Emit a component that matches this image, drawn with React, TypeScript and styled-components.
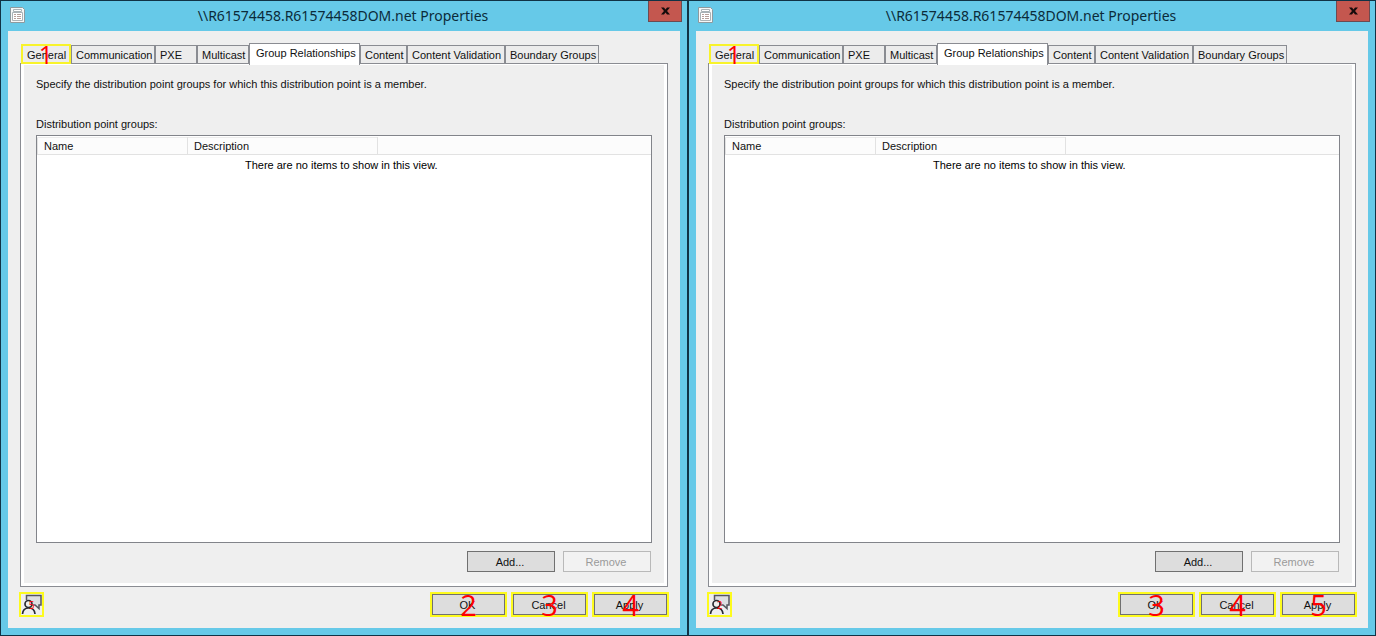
import React from "react";
import styled, { createGlobalStyle, css } from "styled-components";

const GlobalStyle = createGlobalStyle`
  *, *::before, *::after { box-sizing: border-box; }
  body {
    margin: 0;
    background: #123c50;
    color: #111;
    font-family: "Liberation Sans", Arial, sans-serif;
    font-size: 11px;
    line-height: 14px;
  }
  button { font: inherit; color: inherit; }
`;

const Desktop = styled.main`
  display: flex;
  min-height: 100vh;
`;

const Window = styled.section`
  flex: 1;
  min-width: 0;
  display: flex;
  flex-direction: column;
  border: 1px solid #103245;
  background: #66c9e8;
`;

const TitleBar = styled.header`
  display: grid;
  grid-template-columns: 34px 1fr 34px;
  height: 30px;
  padding: 0 5px 0 8px;
`;

const DocumentIcon = styled.svg`
  margin-top: 6px;
`;

const Title = styled.h1`
  margin: 0;
  padding-right: 5px;
  font: 400 14px/29px "Noto Sans", "Open Sans", sans-serif;
  text-align: center;
  white-space: nowrap;
  color: #0b2b3a;
`;

const CloseButton = styled.button`
  display: grid;
  place-items: center;
  height: 21px;
  padding: 0;
  border: 1px solid #6d4a50;
  border-top: 0;
  background: #c4574f;
`;

const Client = styled.div`
  flex: 1;
  display: flex;
  flex-direction: column;
  margin: 0 7px 7px;
  padding: 12px 11px 11px;
  background: #efefef;
`;

const TabStrip = styled.div`
  display: flex;
  align-items: flex-end;
  height: 20px;
  margin: 0 2px;
`;

const Tab = styled.button<{ $width: number; $marked?: boolean }>`
  flex: none;
  position: relative;
  width: ${(p) => p.$width}px;
  height: 18px;
  padding: 1px 0 0 4px;
  border: 1px solid #8a8c92;
  border-bottom: 0;
  background: #ececec;
  text-align: left;
  white-space: nowrap;

  &[aria-selected="true"] {
    z-index: 1;
    height: 22px;
    margin-bottom: -2px;
    padding: 0 0 3px 6px;
    background: #fff;
  }

  ${(p) =>
    p.$marked &&
    css`
      height: 20px;
      margin-bottom: -1px;
      z-index: 1;
      border: 2px solid #f8f32b;
    `}
`;

const Panel = styled.div`
  flex: 1;
  display: flex;
  margin: 0 1px;
  padding: 1px 3px 3px;
  border: 1px solid #8a8c92;
  background: #fff;
`;

const Page = styled.div`
  flex: 1;
  display: flex;
  flex-direction: column;
  padding: 12px 12px 11px;
  background: #efefef;
`;

const Intro = styled.p`
  margin: 0 0 26px;
`;

const ListLabel = styled.h2`
  margin: 0 0 4px;
  font: inherit;
`;

const ListBox = styled.div`
  flex: 1;
  padding: 1px 0;
  border: 1px solid #82848a;
  background: #fff;
`;

const ListTable = styled.table`
  width: 100%;
  border-collapse: collapse;
  table-layout: fixed;
`;

const Column = styled.th<{ $width?: number }>`
  width: ${(p) => (p.$width ? `${p.$width}px` : "auto")};
  height: 17px;
  padding: 0 5px 0 6px;
  border: 1px solid #e2e2e2;
  border-top-color: #ececec;
  background: #fcfcfc;
  font-weight: 400;
  text-align: left;

  &:last-child {
    border-top-color: #fcfcfc;
    border-right: 0;
  }
`;

const EmptyCell = styled.td`
  padding: 3px 6px 0 0;
  text-align: center;
  color: #000;
`;

const ListActions = styled.div`
  display: flex;
  justify-content: flex-end;
  gap: 8px;
  margin: 8px 1px 0 0;
`;

const PushButton = styled.button`
  width: 88px;
  height: 21px;
  padding: 0 2px 0 0;
  border: 1px solid #707070;
  background: #dddddd;
  text-align: center;

  &:disabled {
    border-color: #b9b9b9;
    background: #f2f2f2;
    color: #9a9a9a;
  }
`;

const Footer = styled.footer`
  display: flex;
  gap: 4px;
  margin-top: 5px;
`;

const Highlight = styled.div`
  position: relative;
  display: flex;
  height: 25px;
  border: 2px solid #fdfb1e;

  &:first-child { margin-right: auto; }
  ${PushButton} { width: 73px; }
`;

const FeedbackButton = styled.button`
  display: grid;
  width: 21px;
  height: 21px;
  padding: 0;
  border: 0;
  background: #efefef;
`;

const Marker = styled.span<{ $size: number }>`
  position: absolute;
  inset: 0;
  display: grid;
  place-content: center;
  font: 400 ${(p) => p.$size}px/20px "Open Sans", "Noto Sans", sans-serif;
  color: #ff0000;
  pointer-events: none;
`;

const tabs = [
  { label: "General", width: 50 },
  { label: "Communication", width: 84 },
  { label: "PXE", width: 42 },
  { label: "Multicast", width: 52 },
  { label: "Group Relationships", width: 111 },
  { label: "Content", width: 47 },
  { label: "Content Validation", width: 98 },
  { label: "Boundary Groups", width: 94 },
];

function PropertiesWindow({ feedback, actions }: { feedback: number; actions: number[] }) {
  return (
    <Window>
      <TitleBar>
        <DocumentIcon width="16" height="16" viewBox="0 0 16 16" aria-hidden="true">
          <path d="M1.5.5h12l2 2v13h-14z" fill="#f5f7f7" stroke="#8d9a9f" />
          <path d="M4.5 2.5h8v2h-8zM3.5 5.5h10v8h-10z" fill="#fff" stroke="#a9b2b6" />
          <path d="M5 7.5h2M8 7.5h4M5 9.5h2M8 9.5h4M5 11.5h2M8 11.5h4" stroke="#b5a09b" />
        </DocumentIcon>
        <Title>{"\\\\R61574458.R61574458DOM.net Properties"}</Title>
        <CloseButton aria-label="Close">
          <svg width="9" height="8" viewBox="0 0 10 8" aria-hidden="true">
            <path d="M0 0h3.3L5 2.4 6.7 0H10L6.7 4 10 8H6.7L5 5.6 3.3 8H0l3.3-4z" fill="#160b0b" />
          </svg>
        </CloseButton>
      </TitleBar>
      <Client>
        <TabStrip role="tablist">
          {tabs.map((tab, i) => (
            <Tab
              key={tab.label}
              role="tab"
              aria-selected={i === 4}
              $width={tab.width}
              $marked={i === 0}
            >
              {tab.label}
              {i === 0 && <Marker $size={25}>1</Marker>}
            </Tab>
          ))}
        </TabStrip>
        <Panel role="tabpanel">
          <Page>
            <Intro>
              Specify the distribution point groups for which this distribution point is a member.
            </Intro>
            <ListLabel>Distribution point groups:</ListLabel>
            <ListBox>
              <ListTable aria-label="Distribution point groups">
                <thead>
                  <tr>
                    <Column $width={150}>Name</Column>
                    <Column $width={190}>Description</Column>
                    <Column />
                  </tr>
                </thead>
                <tbody>
                  <tr>
                    <EmptyCell colSpan={3}>There are no items to show in this view.</EmptyCell>
                  </tr>
                </tbody>
              </ListTable>
            </ListBox>
            <ListActions>
              <PushButton>Add...</PushButton>
              <PushButton disabled>Remove</PushButton>
            </ListActions>
          </Page>
        </Panel>
        <Footer>
          <Highlight>
            <FeedbackButton aria-label="Feedback">
              <svg width="21" height="21" viewBox="0 0 21 21" aria-hidden="true">
                <path d="M5.5 6V1.5h14.5v9.5h-2v3.5L14 11h-2" fill="#dcdee2" stroke="#55565f" strokeWidth="1.5" />
                <circle cx="7.5" cy="10" r="3.5" fill="#efefef" stroke="#2a2c33" strokeWidth="1.7" />
                <path d="M1.5 20c.3-4.2 2.5-6 6.2-6s6 1.8 6.3 6" fill="#efefef" stroke="#2a2c33" strokeWidth="1.7" />
              </svg>
            </FeedbackButton>
            <Marker $size={10}>{feedback}</Marker>
          </Highlight>
          {["OK", "Cancel", "Apply"].map((label, i) => (
            <Highlight key={label}>
              <PushButton>{label}</PushButton>
              <Marker $size={29}>{actions[i]}</Marker>
            </Highlight>
          ))}
        </Footer>
      </Client>
    </Window>
  );
}

export default function App() {
  return (
    <>
      <GlobalStyle />
      <Desktop>
        <PropertiesWindow feedback={5} actions={[2, 3, 4]} />
        <PropertiesWindow feedback={2} actions={[3, 4, 5]} />
      </Desktop>
    </>
  );
}
